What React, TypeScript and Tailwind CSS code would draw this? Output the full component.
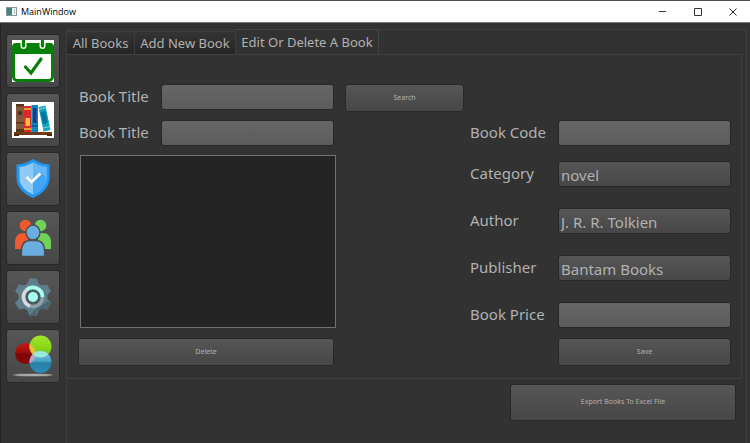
import type { ReactNode } from "react";

const raised =
  "rounded-[3px] border border-[#282828] bg-linear-to-b from-[#565656] to-[#474747] text-[#b1b1b1]";
const field =
  "h-[26px] w-[173px] rounded-[3px] border border-[#282828] bg-linear-to-b from-[#666666] to-[#5c5c5c] px-[2px] text-[15px] text-[#d0d0d0]";
const combo =
  "h-[26px] w-[173px] appearance-none rounded-[3px] border border-[#282828] bg-linear-to-b from-[#565656] to-[#474747] pl-[2px] pt-[2px] text-[15px] leading-[22px] text-[#b1b1b1]";

function CalendarIcon() {
  return (
    <svg viewBox="0 0 42 42" className="size-[42px]">
      <rect width="42" height="42" fill="#fff" />
      <rect x="1.500" y="5.500" width="39" height="35" rx="4" fill="#fff" stroke="#078007" strokeWidth="3" />
      <path d="M4 3h34a4 4 0 0 1 4 4v7H0V7a4 4 0 0 1 4-4z" fill="#078007" />
      <path d="M11.500 0v6M30.500 0v6" stroke="#fff" strokeWidth="6" strokeLinecap="round" />
      <path d="M11.500 0v6M30.500 0v6" stroke="#078007" strokeWidth="3.200" strokeLinecap="round" />
      <path d="M13.500 27l5.500 6 10-14" fill="none" stroke="#078007" strokeWidth="3.200" strokeLinecap="round" />
    </svg>
  );
}

function BooksIcon() {
  return (
    <svg viewBox="0 0 42 36" className="h-[36px] w-[42px]">
      <rect width="42" height="36" fill="#fff" />
      <path d="M2 30h38v3H2z" fill="#713b18" />
      <path d="M2 32h5v2H2zM35 32h5v2h-5z" fill="#4b2810" />
      <path d="M4 2h8v28H4z" fill="#84583a" />
      <path d="M4 2h8v2.500H4zM4 20h8v1.500H4zM4 27h8v3H4z" fill="#573619" />
      <circle cx="8" cy="11" r="2.200" fill="#50301b" />
      <path d="M12 4h7.500v26H12z" fill="#d9292f" />
      <path d="M12 6h7.500v2H12zM12 26h7.500v2H12z" fill="#f39a2d" />
      <path d="M13.500 16h4.500v8h-4.500z" fill="#f9bd3b" />
      <path d="M19.500 3H26v27h-6.500z" fill="#0787c8" />
      <path d="M21 6h3.500v15H21z" fill="#293185" />
      <path d="M19.500 23H26v2h-6.500z" fill="#086198" />
      <path d="M26.500 5l7-1.500L38.500 28l-7 1.500z" fill="#13a4b9" />
      <path d="M28.500 10l4.500-1 2.600 12-4.500 1z" fill="#08759a" />
      <path d="M27 7l7-1.500M31 26l7-1.500" stroke="#77d6da" strokeWidth="1" />
    </svg>
  );
}

function ShieldIcon() {
  return (
    <svg viewBox="0 0 42 42" className="size-[42px]">
      <path d="M21 1c5 3.500 10 5 16.500 5.500V20c0 9-7 16-16.500 20C11.500 36 4.500 29 4.500 20V6.500C11 6 16 4.500 21 1z" fill="#2196f3" />
      <path d="M21 4.500c4.500 2.700 8.500 4 13.500 4.500v11c0 7.500-5.500 13-13.500 16.500C13 33 7.500 27.500 7.500 20V9c5-.5 9-1.800 13.500-4.500z" fill="#90caf9" />
      <path d="M21 4.500c4.500 2.700 8.500 4 13.500 4.500v11c0 7.500-5.500 13-13.500 16.500z" fill="#64b5f6" />
      <path d="M29 14.500l5.500 5.500c0 7.500-5.500 13-13.500 16.500V25z" fill="#42a5f5" />
      <path d="M14.500 19l5 5 9-8.500" fill="none" stroke="#fff" strokeWidth="2.600" />
    </svg>
  );
}

function PeopleIcon() {
  return (
    <svg viewBox="0 0 42 42" className="size-[42px]">
      <circle cx="13.500" cy="8.500" r="5.800" fill="#f15a2f" />
      <path d="M3 32v-6c0-7 3-10 9-10h4v16z" fill="#f15a2f" />
      <circle cx="28.500" cy="8.500" r="5.800" fill="#6fd35a" />
      <path d="M39 32v-6c0-7-3-10-9-10h-4v16z" fill="#6fd35a" />
      <g fill="#6aaee1" stroke="#4d4d4d" strokeWidth="1.400">
        <ellipse cx="21" cy="15.500" rx="7" ry="7.500" />
        <path d="M9.500 39.500V34c0-7 3.500-10.500 9-10.500h5c5.500 0 9 3.500 9 10.500v5.500z" />
      </g>
    </svg>
  );
}

function GearIcon() {
  return (
    <svg viewBox="0 0 42 42" className="size-[42px]">
      <g fill="#607d8b">
        <circle cx="21" cy="21" r="14.500" />
        {[0, 60, 120, 180, 240, 300].map((angle) => (
          <path key={angle} d="M15 9l2.200-6.500h7.600L27 9z" transform={`rotate(${angle} 21 21)`} />
        ))}
      </g>
      <path d="M30 29l6-3.500 2.700 2.200-3.600 6.200-4.100-1.400-6.200 2.500-1.400 4.500h-6.200l8-8z" fill="#4b6573" />
      <circle cx="21" cy="21" r="8" fill="#455a64" />
      <circle cx="21" cy="21" r="9.500" fill="none" stroke="#8fa0a9" strokeWidth="3.600" />
      <path d="M14.300 14.300A9.500 9.500 0 0 1 30.500 21" fill="none" stroke="#a7ffeb" strokeWidth="3.600" />
      <path d="M18 30A9.500 9.500 0 0 1 14.300 14.300" fill="none" stroke="#d5dadc" strokeWidth="3.600" />
      <circle cx="21" cy="21" r="5" fill="#a7ffeb" />
    </svg>
  );
}

function SpheresIcon() {
  return (
    <svg viewBox="0 0 42 42" className="size-[42px]">
      <defs>
        <linearGradient id="red" x1="0" y1="0" x2="0" y2="1">
          <stop stopColor="#c51a17" /><stop offset=".46" stopColor="#9c0c0c" /><stop offset=".54" stopColor="#7d0606" /><stop offset="1" stopColor="#8c0b0b" />
        </linearGradient>
        <linearGradient id="green" x1="0" y1="0" x2="0" y2="1">
          <stop stopColor="#a5e62c" /><stop offset=".5" stopColor="#8ad819" /><stop offset="1" stopColor="#6fbd22" />
        </linearGradient>
        <linearGradient id="blue" x1="0" y1="0" x2="0" y2="1">
          <stop stopColor="#72c5df" /><stop offset=".46" stopColor="#4ba5c6" /><stop offset=".54" stopColor="#267fa7" /><stop offset="1" stopColor="#2e8db8" />
        </linearGradient>
        <radialGradient id="shade">
          <stop stopColor="#b5b5b5" /><stop offset=".75" stopColor="#a0a0a0" /><stop offset="1" stopColor="#707070" />
        </radialGradient>
        <clipPath id="greenDisc"><circle cx="28.500" cy="11.500" r="11" /></clipPath>
        <clipPath id="blueDisc"><circle cx="28.500" cy="27" r="11" /></clipPath>
      </defs>
      <ellipse cx="21" cy="40" rx="20.500" ry="1.600" fill="url(#shade)" />
      <circle cx="13.500" cy="18.500" r="10.500" fill="url(#red)" />
      <circle cx="28.500" cy="11.500" r="11" fill="url(#green)" />
      <circle cx="28.500" cy="27" r="11" fill="url(#blue)" />
      <circle cx="13.500" cy="18.500" r="10.500" fill="#dfbf3c" clipPath="url(#greenDisc)" />
      <circle cx="13.500" cy="18.500" r="10.500" fill="#b8a2c6" clipPath="url(#blueDisc)" />
      <circle cx="28.500" cy="11.500" r="11" fill="#9ce8dc" clipPath="url(#blueDisc)" />
    </svg>
  );
}

const sections: { name: string; icon: ReactNode }[] = [
  { name: "Today", icon: <CalendarIcon /> },
  { name: "Books", icon: <BooksIcon /> },
  { name: "Security", icon: <ShieldIcon /> },
  { name: "Users", icon: <PeopleIcon /> },
  { name: "Settings", icon: <GearIcon /> },
  { name: "Themes", icon: <SpheresIcon /> },
];

function Row({ id, label, width, children }: { id: string; label: string; width: string; children: ReactNode }) {
  return (
    <div className="flex h-[26px] items-start">
      <label htmlFor={id} className={`${width} shrink-0 pl-px text-[15px] leading-[24px] whitespace-nowrap`}>
        {label}
      </label>
      {children}
    </div>
  );
}

function Combo({ id, value }: { id: string; value: string }) {
  return (
    <select id={id} className={combo} defaultValue={value}>
      <option>{value}</option>
    </select>
  );
}

export default function App() {
  const idleTab =
    "mt-[2px] h-[23px] border-t border-r border-[#3c3c3c] bg-linear-to-b from-[#343434] to-[#252525] text-[13px] leading-[22px]";
  return (
    <div className="flex min-h-screen flex-col bg-[#323232] font-['Noto_Sans','Open_Sans',sans-serif] text-[#b1b1b1]">
      <header className="flex h-[23px] items-center border-t border-b border-t-[#4d4d4d] border-b-[#777777] bg-white text-black">
        <svg viewBox="0 0 11 9" className="ml-[6px] h-[9px] w-[11px]">
          <rect x=".5" y=".5" width="10" height="8" fill="#eef3f3" stroke="#8b9495" />
          <rect x="1" y="1" width="5" height="7" fill="#3f8580" />
          <rect x="8" y="2" width="1" height="5" fill="#b9c4c6" />
        </svg>
        <h1 className="ml-[4px] font-['Open_Sans','Noto_Sans',sans-serif] text-[9px] leading-[20px]">MainWindow</h1>
        <div className="ml-auto flex">
          <button aria-label="Minimize" className="flex h-[21px] w-[35px] items-center justify-center">
            <svg viewBox="0 0 7 7" className="size-[7px]"><path d="M0 3.500h7" stroke="#333" /></svg>
          </button>
          <button aria-label="Maximize" className="flex h-[21px] w-[35px] items-center justify-center">
            <svg viewBox="0 0 8 8" className="size-[8px]"><path d="M.5.5h7v7h-7z" fill="none" stroke="#333" /></svg>
          </button>
          <button aria-label="Close" className="flex h-[21px] w-[35px] items-center justify-center">
            <svg viewBox="0 0 8 8" className="size-[8px]"><path d="M.5.5l7 7M7.500.5l-7 7" stroke="#222" /></svg>
          </button>
        </div>
      </header>

      <div className="flex grow border-l border-[#252525] pr-[3px]">
        <nav className="flex w-[65px] shrink-0 flex-col gap-[5px] pt-[11px] pl-[5px]">
          {sections.map((s) => (
            <button key={s.name} aria-label={s.name} className={`${raised} flex size-[54px] items-center justify-center`}>
              {s.icon}
            </button>
          ))}
        </nav>

        <main className="mt-[6px] flex grow flex-col border-x border-t border-[#3e3e3e] pr-[4px]">
          <div role="tablist" className="-mt-px flex h-[25px] items-start">
            <button role="tab" aria-selected="false" className={`${idleTab} w-[68px]`}>All Books</button>
            <button role="tab" aria-selected="false" className={`${idleTab} w-[101px]`}>Add New Book</button>
            <button role="tab" aria-selected="true" className="h-[25px] w-[143px] border-t border-r border-[#444444] bg-[#323232] text-[13px] leading-[24px]">
              Edit Or Delete A Book
            </button>
          </div>

          <section className="flex items-start justify-between border-t border-r border-b border-[#404040] pt-[29px] pr-[10px] pb-[12px] pl-[11px]">
            <div className="flex flex-col">
              <div className="flex items-start gap-[11px]">
                <Row id="lookup" label="Book Title" width="w-[83px]">
                  <input id="lookup" className={field} />
                </Row>
                <button className={`${raised} h-[28px] w-[119px] text-[7px]`}>Search</button>
              </div>
              <div className="mt-[8px]">
                <Row id="title" label="Book Title" width="w-[83px]">
                  <input id="title" className={field} />
                </Row>
              </div>
              <textarea aria-label="Description" className="mt-[9px] ml-[2px] h-[173px] w-[256px] resize-none border border-[#707070] bg-[#242424] p-1 text-[15px]" />
              <button className={`${raised} mt-[10px] h-[28px] w-[256px] text-[7px]`}>Delete</button>
            </div>

            <div className="mt-[36px] flex flex-col">
              <Row id="code" label="Book Code" width="w-[89px]">
                <input id="code" className={field} />
              </Row>
              <div className="mt-[15px] flex flex-col gap-[21px]">
                <Row id="category" label="Category" width="w-[89px]">
                  <Combo id="category" value="novel" />
                </Row>
                <Row id="author" label="Author" width="w-[89px]">
                  <Combo id="author" value="J. R. R. Tolkien" />
                </Row>
                <Row id="publisher" label="Publisher" width="w-[89px]">
                  <Combo id="publisher" value="Bantam Books" />
                </Row>
                <Row id="price" label="Book Price" width="w-[89px]">
                  <input id="price" className={field} />
                </Row>
              </div>
              <button className={`${raised} mt-[10px] h-[28px] w-[173px] self-end text-[7px]`}>Save</button>
            </div>
          </section>

          <button className={`${raised} mt-[5px] mr-[6px] h-[37px] w-[226px] self-end text-[7px]`}>
            Export Books To Excel File
          </button>
        </main>
      </div>
    </div>
  );
}
